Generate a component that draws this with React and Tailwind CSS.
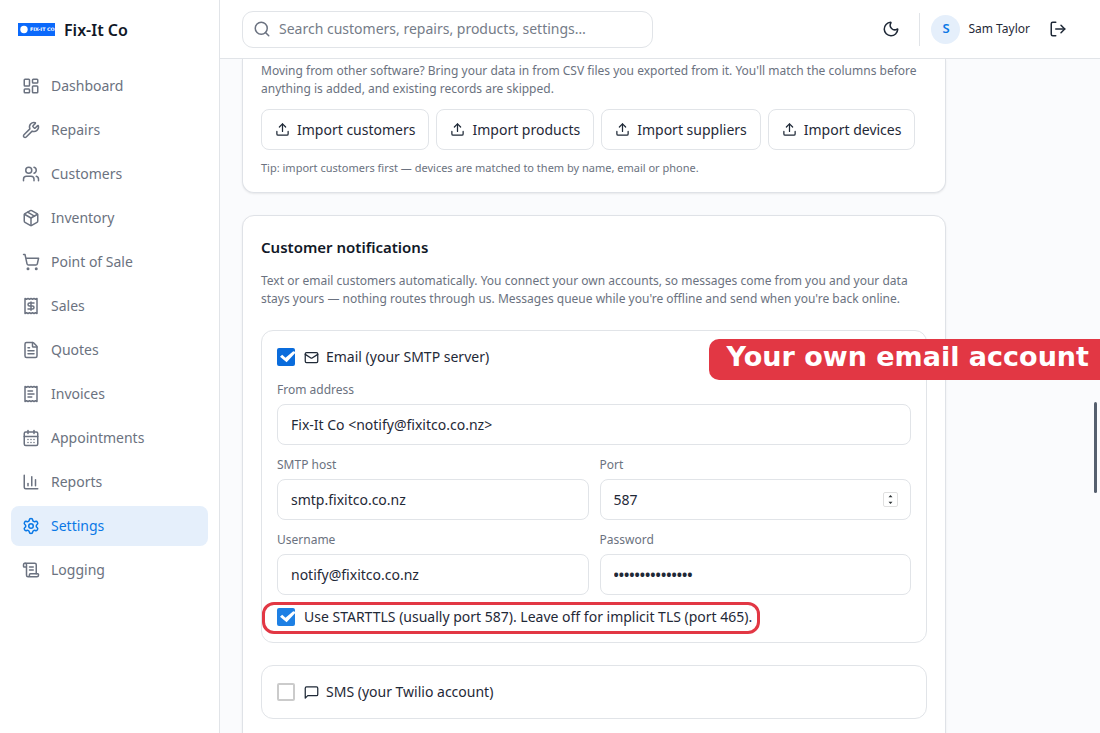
import {
  LayoutDashboard, Wrench, Users, Package, ShoppingCart, FileText, CalendarDays, Settings,
  ScrollText, Search, Moon, LogOut, Upload, Mail,
} from "lucide-react";

function Glyph({ className, children }) {
  return (
    <svg viewBox="0 0 24 24" fill="none" stroke="currentColor" strokeWidth="2" strokeLinecap="round" strokeLinejoin="round" className={className} aria-hidden="true">
      {children}
    </svg>
  );
}

const RECEIPT_EDGE = "M4 2v20l2-1 2 1 2-1 2 1 2-1 2 1 2-1 2 1V2l-2 1-2-1-2 1-2-1-2 1-2-1-2 1Z";

function SalesIcon({ className }) {
  return (
    <Glyph className={className}>
      <path d={RECEIPT_EDGE} />
      <path d="M16 8h-6a2 2 0 1 0 0 4h4a2 2 0 1 1 0 4H8" />
      <path d="M12 17.5v-11" />
    </Glyph>
  );
}

function InvoiceIcon({ className }) {
  return (
    <Glyph className={className}>
      <path d={RECEIPT_EDGE} />
      <path d="M14 8H8" />
      <path d="M16 12H8" />
      <path d="M13 16H8" />
    </Glyph>
  );
}

function ReportsIcon({ className }) {
  return (
    <Glyph className={className}>
      <path d="M3 3v16a2 2 0 0 0 2 2h16" />
      <path d="M18 17V9" />
      <path d="M13 17V5" />
      <path d="M8 17v-3" />
    </Glyph>
  );
}

function MessageIcon({ className }) {
  return (
    <Glyph className={className}>
      <path d="M22 15a2 2 0 0 1-2 2H6l-4 4V5a2 2 0 0 1 2-2h16a2 2 0 0 1 2 2z" />
    </Glyph>
  );
}

const NAV = [
  ["Dashboard", LayoutDashboard],
  ["Repairs", Wrench],
  ["Customers", Users],
  ["Inventory", Package],
  ["Point of Sale", ShoppingCart],
  ["Sales", SalesIcon],
  ["Quotes", FileText],
  ["Invoices", InvoiceIcon],
  ["Appointments", CalendarDays],
  ["Reports", ReportsIcon],
  ["Settings", Settings],
  ["Logging", ScrollText],
];

const IMPORTS = ["Import customers", "Import products", "Import suppliers", "Import devices"];

function Logo() {
  return (
    <svg viewBox="0 0 37 13" className="h-[13px] w-[37px]" role="img" aria-label="Fix-It Co logo">
      <rect width="37" height="13" fill="#0b69fb" />
      <circle cx="6" cy="6.5" r="3.7" fill="#fff" />
      <text x="12" y="8.4" fill="#fff" fontFamily="DejaVu Sans, sans-serif" fontWeight="700" fontSize="4.8">FIX-IT CO</text>
    </svg>
  );
}

function Sidebar() {
  return (
    <aside className="flex w-[220px] shrink-0 flex-col border-r border-[#e1e4e8] bg-white">
      <div className="flex h-[59px] items-center gap-[9px] px-[18px]">
        <Logo />
        <span className="text-base font-semibold text-[#111827]">Fix-It Co</span>
      </div>
      <nav className="flex flex-col gap-1 px-[11px] pt-[7px]">
        {NAV.map(([label, Icon]) => (
          <a
            key={label}
            href="#"
            aria-current={label === "Settings" ? "page" : undefined}
            className="flex h-10 items-center gap-[11px] rounded-lg px-[11px] text-sm text-[#6b7280] aria-[current=page]:bg-[#e5effb] aria-[current=page]:text-[#0a78e6]"
          >
            <Icon className="size-[18px]" />
            {label}
          </a>
        ))}
      </nav>
    </aside>
  );
}

function Header() {
  return (
    <header className="flex h-[59px] shrink-0 items-center justify-between border-b border-[#e1e4e8] bg-white pr-[33px] pl-[22px]">
      <div className="flex h-[37px] w-[411px] items-center gap-2 rounded-[11px] border border-[#e1e4e8] px-[10px] text-[#6b7280]">
        <Search className="size-[18px]" />
        <input
          type="search"
          aria-label="Search"
          placeholder="Search customers, repairs, products, settings…"
          className="min-w-0 flex-1 bg-transparent text-sm outline-none placeholder:text-[#757c88]"
        />
      </div>
      <div className="flex items-center text-[#1f2937]">
        <button type="button" aria-label="Toggle dark mode"><Moon className="size-[18px]" /></button>
        <div className="ml-[19px] flex h-[33px] items-center border-l border-[#e1e4e8] pl-[11px]">
          <span className="flex size-[29px] items-center justify-center rounded-full bg-[#e5effb] text-[13px] font-semibold text-[#0a78e6]">S</span>
          <span className="ml-2 text-xs">Sam Taylor</span>
          <button type="button" aria-label="Log out" className="ml-[19px]"><LogOut className="size-[18px]" /></button>
        </div>
      </div>
    </header>
  );
}

function Checkbox({ id, defaultChecked, tone = "checked:border-[#0a6cdc] checked:bg-[#0a6cdc]" }) {
  return (
    <span className="relative flex size-[18px] shrink-0">
      <input id={id} type="checkbox" defaultChecked={defaultChecked} className={`peer size-[18px] appearance-none rounded-[2px] border-2 border-[#cbcbcb] bg-white ${tone}`} />
      <svg viewBox="0 0 18 18" className="pointer-events-none absolute inset-0 hidden size-[18px] peer-checked:block" aria-hidden="true">
        <path d="M3 8.8 5.2 6.8 8.5 9.8 16.2 3.2 18 3.8V5.2L9.6 14.2Z" fill="#fff" />
      </svg>
    </span>
  );
}

function Field({ id, label, className, children, ...input }) {
  return (
    <div className={className}>
      <label htmlFor={id} className="block text-xs leading-[18px] text-[#6b7280]">{label}</label>
      <div className="relative mt-[5px]">
        <input id={id} {...input} className="block h-[41px] w-full appearance-none rounded-lg border border-[#e1e4e8] bg-white px-[13px] text-sm text-[#1f2937] outline-none [&::-webkit-inner-spin-button]:appearance-none [&[type=password]]:font-bold" />
        {children}
      </div>
    </div>
  );
}

function Spinner() {
  return (
    <span className="pointer-events-none absolute inset-y-0 right-[13px] flex items-center" aria-hidden="true">
      <svg viewBox="0 0 15 15" className="size-[15px]">
        <rect x="0.5" y="0.5" width="14" height="14" rx="1.5" fill="#fff" stroke="#e0e0e0" />
        <path d="M5.5 5.2 7.5 3l2 2.2zM5.5 9.8l2 2.2 2-2.2z" fill="#2e3436" />
      </svg>
    </span>
  );
}

const CARD = "border border-[#dfe2e7] bg-white px-[18px] shadow-[0_1px_2px_rgba(0,0,0,0.08)]";

function ImportCard() {
  return (
    <section className={`rounded-b-xl border-t-0 pt-[3px] pb-4 ${CARD}`}>
      <p className="text-xs leading-[18px] text-[#6b7280]">
        Moving from other software? Bring your data in from CSV files you exported from it. You'll match the columns before anything is added, and existing records are skipped.
      </p>
      <div className="mt-[11px] flex flex-wrap gap-[7px]">
        {IMPORTS.map((label) => (
          <button key={label} type="button" className="flex h-[41px] items-center gap-[7px] rounded-lg border border-[#e1e4e8] bg-white px-[13px] text-sm text-[#1f2937]">
            <Upload className="size-[15px]" />
            {label}
          </button>
        ))}
      </div>
      <p className="mt-[10px] text-[11px] leading-4 text-[#6b7280]">
        Tip: import customers first — devices are matched to them by name, email or phone.
      </p>
    </section>
  );
}

function NotificationsCard() {
  return (
    <section className={`rounded-xl pt-5 pb-20 ${CARD}`}>
      <h2 className="text-[15px] leading-[22px] font-semibold text-[#111827]">Customer notifications</h2>
      <p className="mt-[14px] text-xs leading-[18px] text-[#6b7280]">
        Text or email customers automatically. You connect your own accounts, so messages come from you and your data stays yours — nothing routes through us. Messages queue while you're offline and send when you're back online.
      </p>

      <div className="mt-[22px] rounded-xl border border-[#e1e4e8] px-[15px] pt-[15px] pb-[14px]">
        <div className="flex h-[22px] items-center gap-[9px] text-sm text-[#1f2937]">
          <Checkbox id="email-enabled" defaultChecked />
          <label htmlFor="email-enabled" className="flex items-center gap-[7px]">
            <Mail className="size-[15px]" />
            Email (your SMTP server)
          </label>
        </div>
        <div className="mt-[13px] grid grid-cols-2 gap-[11px]">
          <Field id="from" label="From address" className="col-span-2" defaultValue="Fix-It Co <notify@fixitco.co.nz>" />
          <Field id="host" label="SMTP host" defaultValue="smtp.fixitco.co.nz" />
          <Field id="port" label="Port" type="number" defaultValue="587"><Spinner /></Field>
          <Field id="username" label="Username" defaultValue="notify@fixitco.co.nz" />
          <Field id="password" label="Password" type="password" defaultValue="fixit-mail-pass" />
        </div>
        <div className="relative mt-[11px] flex h-[22px] w-max items-center gap-[9px] text-sm text-[#1f2937]">
          <Checkbox id="starttls" defaultChecked tone="checked:border-[#1e80e4] checked:bg-[#1e80e4]" />
          <label htmlFor="starttls">Use STARTTLS (usually port 587). Leave off for implicit TLS (port 465).</label>
          <span className="pointer-events-none absolute -top-1 right-[-8px] -bottom-[6px] left-[-15px] rounded-xl border-3 border-[#e23744]" />
        </div>
      </div>

      <div className="mt-[22px] rounded-xl border border-[#e1e4e8] p-[15px]">
        <div className="flex h-[22px] items-center gap-[9px] text-sm text-[#1f2937]">
          <Checkbox id="sms-enabled" />
          <label htmlFor="sms-enabled" className="flex items-center gap-[7px]">
            <MessageIcon className="size-[15px]" />
            SMS (your Twilio account)
          </label>
        </div>
      </div>
    </section>
  );
}

export default function App() {
  return (
    <div className="relative flex h-screen overflow-hidden bg-[#fafbfd] font-['Noto_Sans',sans-serif]">
      <Sidebar />
      <div className="flex min-w-0 flex-1 flex-col">
        <Header />
        <main className="flex-1 overflow-hidden px-[22px]">
          <div className="flex max-w-[704px] flex-col gap-[22px]">
            <ImportCard />
            <NotificationsCard />
          </div>
        </main>
      </div>
      <div className="absolute top-[339px] right-0 rounded-l-[10px] bg-[#e23744] pr-[11px] pb-[5px] pl-[18px] font-['DejaVu_Sans',sans-serif] text-[27px] leading-9 font-bold whitespace-nowrap text-white">
        Your own email account
      </div>
      <div className="absolute top-[402px] right-[3px] h-[91px] w-[3px] rounded-full bg-[#555f6e]" />
    </div>
  );
}
